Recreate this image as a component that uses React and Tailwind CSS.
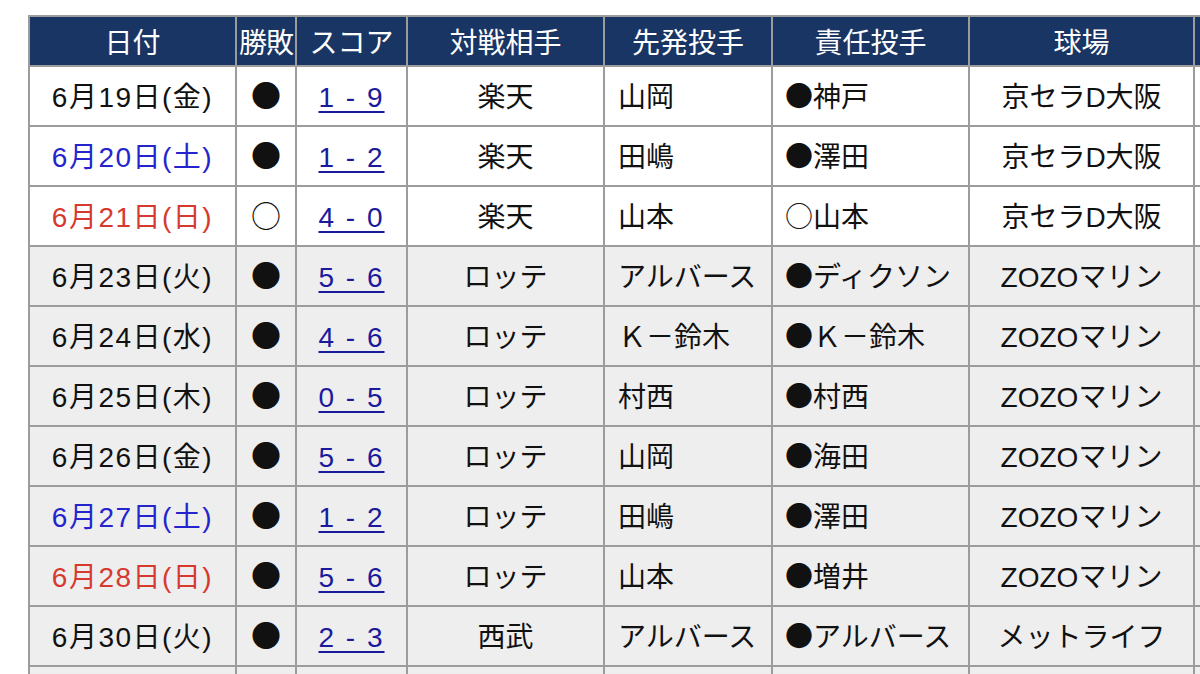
import React from 'react';

const games = [
  { date: '6月19日(金)', day: 'wd', res: '●', score: '1 - 9', opp: '楽天', starter: '山岡', dec: '●', decName: '神戸', park: '京セラD大阪' },
  { date: '6月20日(土)', day: 'sat', res: '●', score: '1 - 2', opp: '楽天', starter: '田嶋', dec: '●', decName: '澤田', park: '京セラD大阪' },
  { date: '6月21日(日)', day: 'sun', res: '○', score: '4 - 0', opp: '楽天', starter: '山本', dec: '○', decName: '山本', park: '京セラD大阪' },
  { date: '6月23日(火)', day: 'wd', res: '●', score: '5 - 6', opp: 'ロッテ', starter: 'アルバース', dec: '●', decName: 'ディクソン', park: 'ZOZOマリン', gray: true },
  { date: '6月24日(水)', day: 'wd', res: '●', score: '4 - 6', opp: 'ロッテ', starter: 'Ｋ－鈴木', dec: '●', decName: 'Ｋ－鈴木', park: 'ZOZOマリン', gray: true },
  { date: '6月25日(木)', day: 'wd', res: '●', score: '0 - 5', opp: 'ロッテ', starter: '村西', dec: '●', decName: '村西', park: 'ZOZOマリン', gray: true },
  { date: '6月26日(金)', day: 'wd', res: '●', score: '5 - 6', opp: 'ロッテ', starter: '山岡', dec: '●', decName: '海田', park: 'ZOZOマリン', gray: true },
  { date: '6月27日(土)', day: 'sat', res: '●', score: '1 - 2', opp: 'ロッテ', starter: '田嶋', dec: '●', decName: '澤田', park: 'ZOZOマリン', gray: true },
  { date: '6月28日(日)', day: 'sun', res: '●', score: '5 - 6', opp: 'ロッテ', starter: '山本', dec: '●', decName: '増井', park: 'ZOZOマリン', gray: true },
  { date: '6月30日(火)', day: 'wd', res: '●', score: '2 - 3', opp: '西武', starter: 'アルバース', dec: '●', decName: 'アルバース', park: 'メットライフ', gray: true },
  { date: '7月1日(水)', day: 'wd', res: '○', score: '6 - 2', opp: '西武', starter: 'Ｋ－鈴木', dec: '○', decName: 'Ｋ－鈴木', park: 'メットライフ', gray: true },
];

const dayColor = {
  wd: 'text-[#111111]',
  sat: 'text-[#2424cf]',
  sun: 'text-[#d63a2f]',
};

const latin = { fontFamily: '"Liberation Sans", "Noto Sans CJK JP", sans-serif' };
const cjk = { fontFamily: '"Noto Sans CJK JP", "Liberation Sans", sans-serif' };

const th = 'border-2 border-[#9c9c9c] bg-[#193564] text-white font-normal text-center h-[50px] p-0';
const td = 'border-2 border-[#9c9c9c] h-[60px] p-0 pt-[4px] whitespace-nowrap';

export default function App() {
  return (
    <div className="w-[1200px] h-[674px] overflow-hidden bg-white">
      <div className="pt-[15px] pl-[28px]">
        <table
          className="table-fixed border-collapse w-[1380px] text-[28px] leading-none text-[#111111]"
          style={latin}
        >
          <colgroup>
            <col className="w-[207px]" />
            <col className="w-[60px]" />
            <col className="w-[111px]" />
            <col className="w-[197px]" />
            <col className="w-[168px]" />
            <col className="w-[197px]" />
            <col className="w-[225px]" />
            <col className="w-[215px]" />
          </colgroup>
          <thead>
            <tr style={cjk}>
              <th className={th}>日付</th>
              <th className={th + ' tracking-[-1px]'}>勝敗</th>
              <th className={th}>スコア</th>
              <th className={th}>対戦相手</th>
              <th className={th}>先発投手</th>
              <th className={th}>責任投手</th>
              <th className={th}>球場</th>
              <th className={th}>備考</th>
            </tr>
          </thead>
          <tbody>
            {games.map((g, i) => (
              <tr key={i} className={g.gray ? 'bg-[#eeeeee]' : 'bg-white'}>
                <td className={td + ' text-center tracking-[1.5px] ' + dayColor[g.day]}>{g.date}</td>
                <td className={td + ' text-center'}>
                  <span className="text-[30px] leading-[0]" style={cjk}>{g.res}</span>
                </td>
                <td className={td + ' text-center'}>
                  <a href="#" className="text-[#1c1a9c] tracking-[2px] underline underline-offset-[4px] decoration-[2px]">{g.score}</a>
                </td>
                <td className={td + ' text-center'}>{g.opp}</td>
                <td className={td + ' pl-[13px]'}>{g.starter}</td>
                <td className={td + ' pl-[12px]'}>
                  <span className="leading-[0]" style={cjk}>{g.dec}</span>{g.decName}
                </td>
                <td className={td + ' text-center'}>{g.park}</td>
                <td className={td}></td>
              </tr>
            ))}
          </tbody>
        </table>
      </div>
    </div>
  );
}
